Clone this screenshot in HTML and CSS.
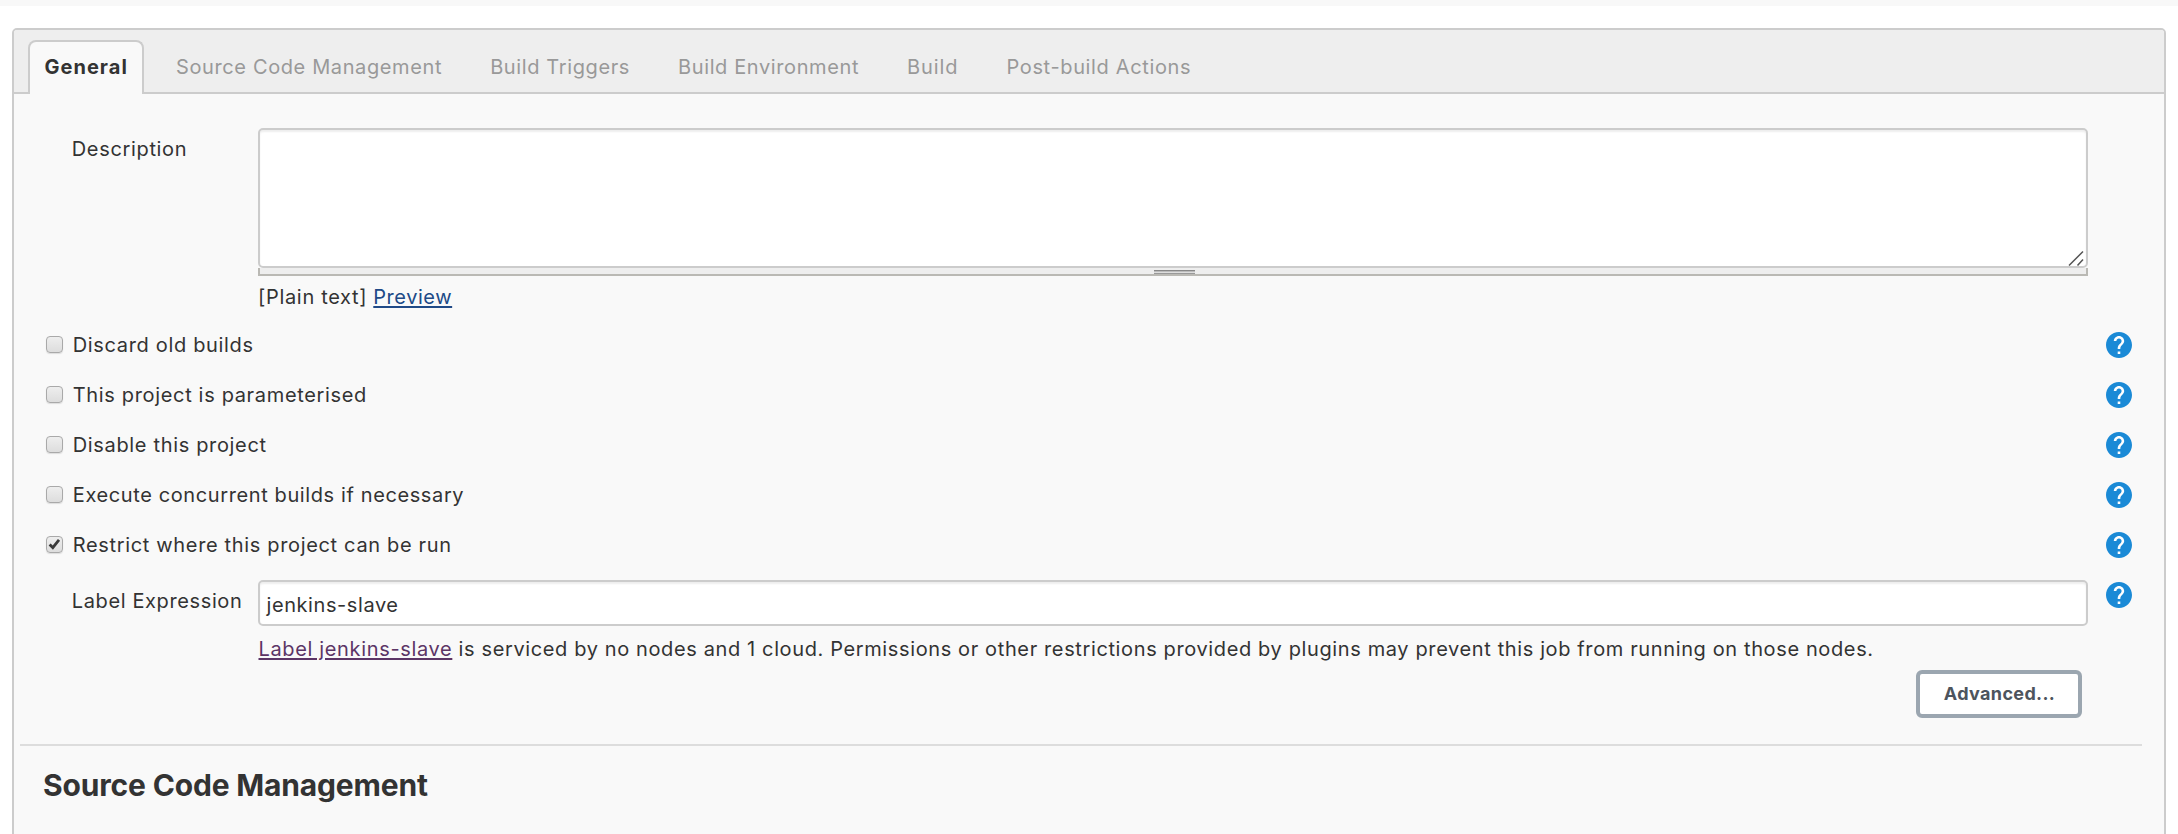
FILE: index.html
```html
<!DOCTYPE html>
<html lang="en">
<head>
<meta charset="utf-8">
<title>Project configuration</title>
<link rel="stylesheet" href="styles.css">
</head>
<body>
<svg class="defs" aria-hidden="true">
  <symbol id="help" viewBox="2 2 20 20">
    <circle cx="12" cy="12" r="8" fill="#fff"/>
    <path fill="#1b8ad6" d="M12 2C6.480 2 2 6.480 2 12s4.480 10 10 10 10-4.480 10-10S17.520 2 12 2zm1 17h-2v-2h2v2zm2.070-7.750l-.9.920C13.450 12.900 13 13.500 13 15h-2v-.5c0-1.100.45-2.100 1.170-2.830l1.240-1.260c.37-.36.59-.86.59-1.410 0-1.100-.9-2-2-2s-2 .9-2 2H8c0-2.210 1.790-4 4-4s4 1.790 4 4c0 .88-.36 1.680-.93 2.250z"/>
  </symbol>
</svg>
<div class="page-strip"></div>
<main class="panel">
  <nav class="tabs">
    <a class="tab active"><span class="t-general">General</span></a>
    <a class="tab">Source Code Management</a>
    <a class="tab">Build Triggers</a>
    <a class="tab t-env">Build Environment</a>
    <a class="tab t-build">Build</a>
    <a class="tab t-post">Post-build Actions</a>
  </nav>
  <form class="config">
    <section class="field-row description">
      <label class="field-label">Description</label>
      <div class="field">
        <div class="textarea">
          <svg class="grip" width="16" height="16" viewBox="0 0 16 16"><path d="M1 15.500L15 1.500M9.500 15.500L15 9.500" fill="none" stroke="#555" stroke-width="1.500"/></svg>
        </div>
        <div class="resizer"><span class="handle"></span></div>
        <div class="format"><span>[Plain text]</span><a class="preview">Preview</a></div>
      </div>
    </section>
    <div class="option"><span class="checkbox"></span><span class="option-label">Discard old builds</span><svg class="help"><use href="#help"/></svg></div>
    <div class="option"><span class="checkbox"></span><span class="option-label">This project is parameterised</span><svg class="help"><use href="#help"/></svg></div>
    <div class="option"><span class="checkbox"></span><span class="option-label">Disable this project</span><svg class="help"><use href="#help"/></svg></div>
    <div class="option"><span class="checkbox"></span><span class="option-label t-exec">Execute concurrent builds if necessary</span><svg class="help"><use href="#help"/></svg></div>
    <div class="option"><span class="checkbox"><svg class="check" viewBox="0 0 16 16"><path d="M2.800 8L6.200 11.300L12.800 3" fill="none" stroke="#3a3a3a" stroke-width="3"/></svg></span><span class="option-label">Restrict where this project can be run</span><svg class="help"><use href="#help"/></svg></div>
    <section class="field-row expression">
      <label class="field-label">Label Expression</label>
      <div class="field">
        <div class="input">jenkins-slave</div>
        <p class="note"><a class="visited">Label jenkins-slave</a> is serviced by no nodes and 1 cloud. Permissions or other restrictions provided by plugins may prevent this job from running on those nodes.</p>
        <div class="actions"><button type="button" class="advanced">Advanced...</button></div>
      </div>
      <svg class="help"><use href="#help"/></svg>
    </section>
    <section class="scm"><h2>Source Code Management</h2></section>
  </form>
</main>
</body>
</html>
```
FILE: styles.css
```css
* { box-sizing: border-box; }

body {
  margin: 0;
  height: 834px;
  overflow: hidden;
  background: #fff;
  color: #333;
  font: 20px/24px Inter, "Liberation Sans", sans-serif;
  letter-spacing: 0.66px;
}

.defs { display: block; width: 0; height: 0; }
.page-strip { height: 6px; background: #f8f8f8; }

.panel {
  margin: 22px 12px 0;
  height: 820px;
  border: 2px solid #ccc;
  border-radius: 5px 5px 0 0;
  background: #f9f9f9;
}

/* Tab bar */
.tabs {
  display: flex;
  align-items: flex-end;
  height: 64px;
  padding-left: 14px;
  border-bottom: 2px solid #ccc;
  border-radius: 3px 3px 0 0;
  background: #eee;
  color: #999;
  letter-spacing: 0.62px;
}
.tab { height: 52px; margin-right: 48px; line-height: 54px; white-space: nowrap; }
.tab.active {
  width: 116px;
  height: 54px;
  margin: 0 32px -2px 0;
  padding-left: 14.5px;
  line-height: 50px;
  border: 2px solid #ccc;
  border-bottom: 0;
  border-radius: 8px 8px 0 0;
  background: #f9f9f9;
  color: #333;
  font-weight: 700;
}
.t-general { letter-spacing: 1.02px; }
.t-env { letter-spacing: 0.61px; }
.t-build { letter-spacing: 0.9px; }
.t-post { letter-spacing: 0.65px; }

/* Form rows */
.config { padding-top: 34px; }
.field-row { display: flex; padding-left: 57px; }
.field-label { width: 187px; flex: none; }
.field { width: 1830px; flex: none; }
.description { height: 192px; }
.description .field-label { padding: 9px 0 0 0.75px; }

.textarea {
  display: flex;
  align-items: flex-end;
  justify-content: flex-end;
  height: 140px;
  border: 2px solid #ccc;
  border-radius: 5px;
  background: #fff;
  box-shadow: inset 0 2px 2px #eee;
}
.grip { display: block; margin: 0 2px 0 0; }
.resizer {
  display: flex;
  justify-content: center;
  height: 8px;
  padding-top: 2px;
  border: 2px solid #bab9b4;
  border-top: 0;
  background: #eee;
}
.handle {
  width: 41px;
  height: 4px;
  margin-right: -3px;
  background: linear-gradient(#888 1px, #bbb 1px 2px, #ddd 2px 3px, #999 3px);
}
.format { display: flex; padding: 9px 0 0; letter-spacing: 0.68px; }
.preview {
  height: 24px;
  margin-left: 6px;
  color: #204a87;
  letter-spacing: 0.55px;
  text-decoration: underline 2px;
  text-underline-offset: 2px;
  text-decoration-skip-ink: none;
}

.option { display: flex; align-items: center; height: 50px; padding: 0 32px 0 32px; }
.option-label { flex: 1; margin-left: 9.75px; }
.t-exec { letter-spacing: 0.61px; }
.checkbox {
  width: 17px;
  height: 17px;
  margin-top: -1px;
  border: 1.500px solid #a9a9a9;
  border-radius: 4px;
  background: linear-gradient(#eee, #ddd);
  box-shadow: 0 1px 1px #ddd;
}
.check { display: block; width: 15px; height: 15px; }
.help { display: block; width: 26px; height: 26px; flex: none; }

.expression { height: 174px; padding-top: 10px; }
.expression .field-label { padding: 9px 0 0 0.75px; letter-spacing: 0.62px; }
.expression .help { margin: 2px 0 0 18px; }
.input {
  height: 46px;
  padding-left: 6.5px;
  line-height: 46px;
  border: 2px solid #ccc;
  border-radius: 5px;
  background: #fff;
  box-shadow: inset 0 2px 2px #eee;
  letter-spacing: 0.58px;
}
.note { margin: 11px 0 0 0.5px; letter-spacing: 0.622px; white-space: nowrap; }
.visited {
  color: #5c3566;
  text-decoration: underline 2px;
  text-underline-offset: 2px;
  letter-spacing: 0.65px;
}
.actions { display: flex; justify-content: flex-end; padding: 9px 6px 0 0; }
.advanced {
  width: 166px;
  height: 48px;
  padding: 0 0 1px 1px;
  border: 4px solid #9ba6b0;
  border-radius: 6px;
  background: #fff;
  color: #4d545d;
  font: 700 18px/38px Inter, "Liberation Sans", sans-serif;
  letter-spacing: 0.35px;
}

.scm { margin: 0 22px 0 6px; padding: 21px 0 0 23px; border-top: 2px solid #ddd; }
.scm h2 { margin: 0; font: 700 30px/36px Inter, "Liberation Sans", sans-serif; letter-spacing: -0.17px; }
```
